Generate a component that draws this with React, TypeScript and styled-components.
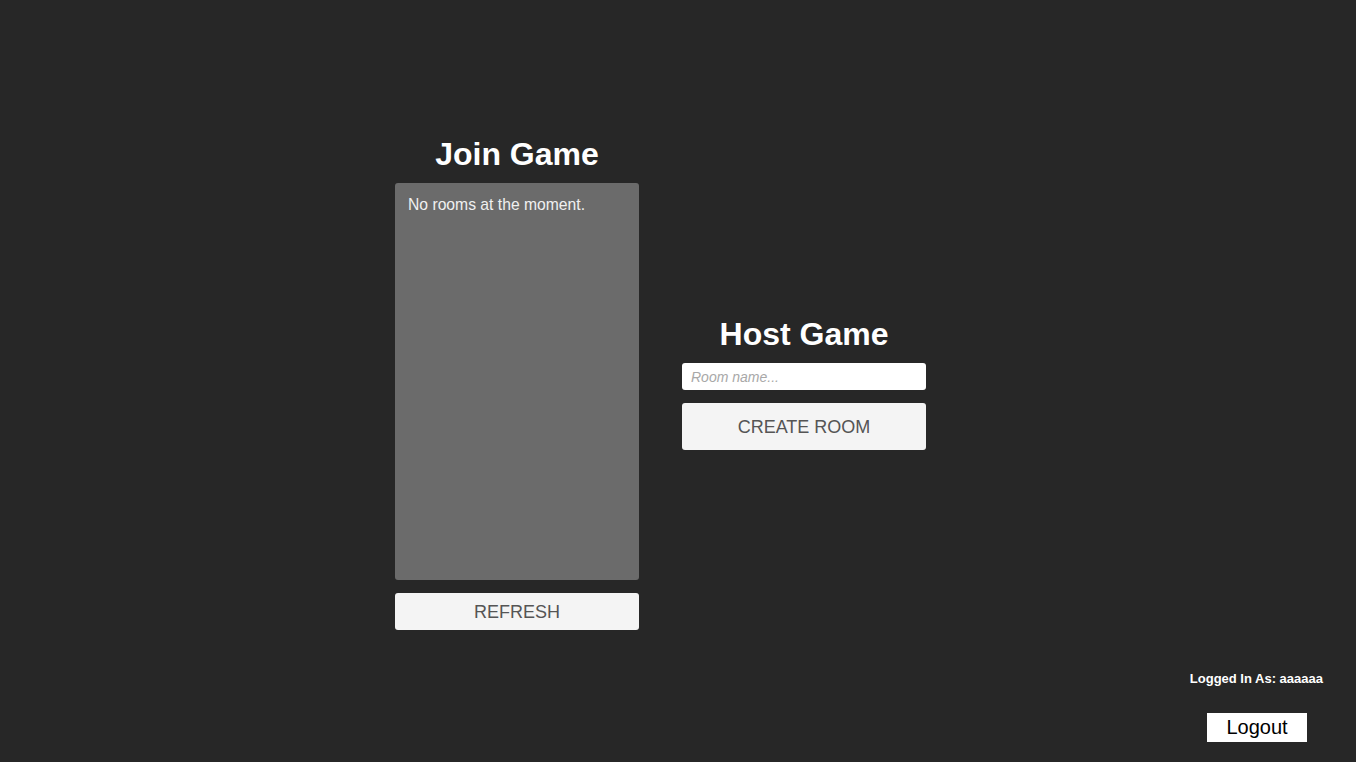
import React from 'react';
import styled, { createGlobalStyle } from 'styled-components';

const GlobalStyle = createGlobalStyle`
    html, body {
        margin: 0;
        padding: 0;
        background-color: #272727;
        font-family: "Liberation Sans", Arial, sans-serif;
    }
`

export default function App() {
    return <Page>
        <GlobalStyle />
        <Main>
            <Column>
                <Title>Join Game</Title>
                <RoomList>
                    <EmptyText>No rooms at the moment.</EmptyText>
                </RoomList>
                <Button $height={37}>REFRESH</Button>
            </Column>
            <Column>
                <Title>Host Game</Title>
                <RoomInput placeholder="Room name..." />
                <Button $height={47}>CREATE ROOM</Button>
            </Column>
        </Main>
        <Footer>
            <UserBox>
                <LoggedIn>Logged In As: aaaaaa</LoggedIn>
                <LogoutButton>Logout</LogoutButton>
            </UserBox>
        </Footer>
    </Page>
}

const Page = styled.div`
    height: 762px;
    display: flex;
    flex-direction: column;
    overflow: hidden;
`

const Main = styled.div`
    display: flex;
    flex-direction: row;
    align-items: center;
    gap: 43px;
    padding-top: 136px;
    padding-left: 395px;
`

const Column = styled.div`
    width: 244px;
    display: flex;
    flex-direction: column;
`

const Title = styled.h1`
    margin: 0 0 10px 0;
    font-size: 32px;
    line-height: 37px;
    font-weight: bold;
    color: #ffffff;
    text-align: center;
`

const RoomList = styled.div`
    height: 397px;
    background-color: #6b6b6b;
    border-radius: 3px;
    padding: 13px 13px;
    box-sizing: border-box;
    margin-bottom: 13px;
`

const EmptyText = styled.div`
    font-size: 15.7px;
    line-height: 17px;
    color: #f0f0f0;
`

const RoomInput = styled.input`
    height: 27px;
    box-sizing: border-box;
    border: none;
    border-radius: 3px;
    background-color: #ffffff;
    padding: 0 9px;
    margin-bottom: 13px;
    font-family: "Liberation Sans", Arial, sans-serif;
    font-size: 14px;
    font-style: italic;
    outline: none;
    &::placeholder {
        color: #a8a8a8;
    }
`

const Button = styled.button<{ $height: number }>`
    height: ${p => p.$height}px;
    border: none;
    border-radius: 3px;
    background-color: #f4f4f4;
    color: #555555;
    font-family: "Liberation Sans", Arial, sans-serif;
    font-size: 18px;
    cursor: pointer;
    padding: 2px 0 0 0;
`

const Footer = styled.div`
    margin-top: auto;
    display: flex;
    justify-content: flex-end;
    padding: 0 33px 20px 0;
`

const UserBox = styled.div`
    display: flex;
    flex-direction: column;
    align-items: flex-end;
    gap: 27px;
`

const LoggedIn = styled.div`
    font-size: 13px;
    line-height: 15px;
    font-weight: bold;
    color: #ffffff;
`

const LogoutButton = styled.button`
    width: 100px;
    height: 29px;
    margin-right: 16px;
    border: none;
    border-radius: 0;
    background-color: #ffffff;
    color: #000000;
    font-family: "Liberation Sans", Arial, sans-serif;
    font-size: 20px;
    padding: 0;
    cursor: pointer;
`
